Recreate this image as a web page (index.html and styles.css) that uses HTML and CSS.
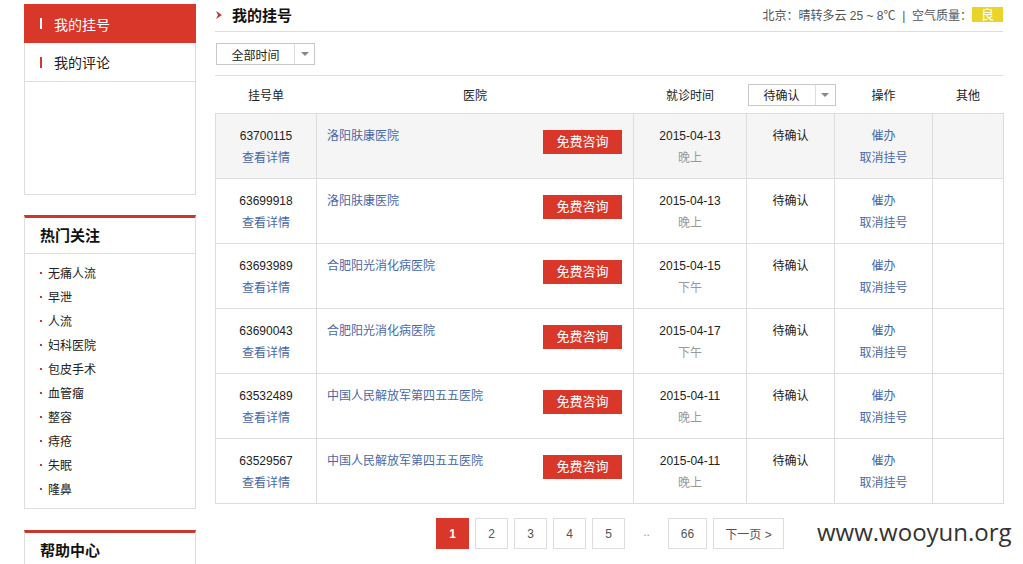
FILE: index.html
```html
<!DOCTYPE html>
<html lang="zh-CN">
<head>
  <meta charset="UTF-8" />
  <title>我的挂号</title>
  <link rel="stylesheet" href="styles.css">
</head>
<body>
  <div class="page">
    <div class="sidebar">
      <div class="side-menu">
        <a class="menu-item active" href="#"><i></i>我的挂号</a>
        <a class="menu-item" href="#"><i></i>我的评论</a>
      </div>

      <div class="side-box">
        <div class="box-title">热门关注</div>
        <ul class="hot-list">
          <li>无痛人流</li>
          <li>早泄</li>
          <li>人流</li>
          <li>妇科医院</li>
          <li>包皮手术</li>
          <li>血管瘤</li>
          <li>整容</li>
          <li>痔疮</li>
          <li>失眠</li>
          <li>隆鼻</li>
        </ul>
      </div>

      <div class="side-box">
        <div class="box-title">帮助中心</div>
      </div>
    </div>

    <div class="main">
      <div class="main-head">
        <h2 class="main-title">
          <svg width="6" height="8" viewBox="0 0 6 8"><polygon points="0,0 6,4 0,8 2,4" fill="#b8392e"/></svg>
          我的挂号
        </h2>
        <div class="weather">北京：晴转多云 25 ~ 8℃ &nbsp;|&nbsp; 空气质量：<span class="aqi">良</span></div>
      </div>

      <div class="filter-bar">
        <div class="select time-select">
          <span class="select-text">全部时间</span>
          <span class="select-arrow"><b></b></span>
        </div>
      </div>

      <table class="reg-table">
        <thead>
          <tr>
            <th class="c-no">挂号单</th>
            <th class="c-hos">医院</th>
            <th class="c-date">就诊时间</th>
            <th class="c-state">
              <div class="select state-select">
                <span class="select-text">待确认</span>
                <span class="select-arrow"><b></b></span>
              </div>
            </th>
            <th class="c-op">操作</th>
            <th class="c-other">其他</th>
          </tr>
        </thead>
        <tbody>
          <tr class="hover">
            <td class="c-no">63700115<br><a href="#">查看详情</a></td>
            <td class="c-hos"><div class="hos"><a href="#">洛阳肤康医院</a><span class="btn-consult">免费咨询</span></div></td>
            <td class="c-date">2015-04-13<br><span class="gray">晚上</span></td>
            <td class="c-state">待确认</td>
            <td class="c-op"><a href="#">催办</a><br><a href="#">取消挂号</a></td>
            <td class="c-other"></td>
          </tr>
          <tr>
            <td class="c-no">63699918<br><a href="#">查看详情</a></td>
            <td class="c-hos"><div class="hos"><a href="#">洛阳肤康医院</a><span class="btn-consult">免费咨询</span></div></td>
            <td class="c-date">2015-04-13<br><span class="gray">晚上</span></td>
            <td class="c-state">待确认</td>
            <td class="c-op"><a href="#">催办</a><br><a href="#">取消挂号</a></td>
            <td class="c-other"></td>
          </tr>
          <tr>
            <td class="c-no">63693989<br><a href="#">查看详情</a></td>
            <td class="c-hos"><div class="hos"><a href="#">合肥阳光消化病医院</a><span class="btn-consult">免费咨询</span></div></td>
            <td class="c-date">2015-04-15<br><span class="gray">下午</span></td>
            <td class="c-state">待确认</td>
            <td class="c-op"><a href="#">催办</a><br><a href="#">取消挂号</a></td>
            <td class="c-other"></td>
          </tr>
          <tr>
            <td class="c-no">63690043<br><a href="#">查看详情</a></td>
            <td class="c-hos"><div class="hos"><a href="#">合肥阳光消化病医院</a><span class="btn-consult">免费咨询</span></div></td>
            <td class="c-date">2015-04-17<br><span class="gray">下午</span></td>
            <td class="c-state">待确认</td>
            <td class="c-op"><a href="#">催办</a><br><a href="#">取消挂号</a></td>
            <td class="c-other"></td>
          </tr>
          <tr>
            <td class="c-no">63532489<br><a href="#">查看详情</a></td>
            <td class="c-hos"><div class="hos"><a href="#">中国人民解放军第四五五医院</a><span class="btn-consult">免费咨询</span></div></td>
            <td class="c-date">2015-04-11<br><span class="gray">晚上</span></td>
            <td class="c-state">待确认</td>
            <td class="c-op"><a href="#">催办</a><br><a href="#">取消挂号</a></td>
            <td class="c-other"></td>
          </tr>
          <tr>
            <td class="c-no">63529567<br><a href="#">查看详情</a></td>
            <td class="c-hos"><div class="hos"><a href="#">中国人民解放军第四五五医院</a><span class="btn-consult">免费咨询</span></div></td>
            <td class="c-date">2015-04-11<br><span class="gray">晚上</span></td>
            <td class="c-state">待确认</td>
            <td class="c-op"><a href="#">催办</a><br><a href="#">取消挂号</a></td>
            <td class="c-other"></td>
          </tr>
        </tbody>
      </table>

      <div class="pager">
        <a class="page-btn current" href="#">1</a>
        <a class="page-btn" href="#">2</a>
        <a class="page-btn" href="#">3</a>
        <a class="page-btn" href="#">4</a>
        <a class="page-btn" href="#">5</a>
        <span class="page-dots">..</span>
        <a class="page-btn wide" href="#">66</a>
        <a class="page-btn next" href="#">下一页 &gt;</a>
      </div>
    </div>
  </div>

  <div class="watermark">www.wooyun.org</div>
</body>
</html>
```

FILE: styles.css
```css
html, body {
  margin: 0;
  padding: 0;
  background: #fff;
  color: #333;
  font-family: "Liberation Sans", "Noto Sans CJK SC", sans-serif;
  font-size: 12px;
}
a { text-decoration: none; color: #4a67a8; }
ul { margin: 0; padding: 0; list-style: none; }

.page {
  display: flex;
  align-items: flex-start;
  padding-left: 24px;
  gap: 19px;
}

/* 1. Sidebar */
.sidebar {
  width: 172px;
  padding-top: 4px;
}
.side-menu {
  height: 190px;
  border: 1px solid #ddd;
  border-top: none;
}
.menu-item {
  display: flex;
  align-items: center;
  height: 38px;
  padding-left: 29px;
  font-size: 14px;
  color: #222;
  border-bottom: 1px solid #ddd;
}
.menu-item i {
  display: block;
  width: 2px;
  height: 11px;
  margin-right: 12px;
  margin-left: -14px;
  background: #d8372a;
}
.menu-item.active {
  background: #d8372a;
  color: #fff;
  margin: 0 -1px;
  padding-left: 30px;
  height: 39px;
  border-bottom: none;
}
.menu-item.active i { background: #fff; }

.side-box {
  margin-top: 20px;
  border: 1px solid #ddd;
  border-top: 3px solid #c8392b;
}
.side-box + .side-box { margin-top: 21px; }
.box-title {
  height: 35px;
  line-height: 35px;
  padding-left: 15px;
  font-size: 15px;
  font-weight: bold;
  color: #111;
  border-bottom: 1px solid #ddd;
}
.hot-list {
  padding: 8px 0 6px 15px;
}
.hot-list li {
  height: 24px;
  line-height: 24px;
  color: #222;
  font-size: 12px;
}
.hot-list li::before {
  content: "";
  display: inline-block;
  width: 2px;
  height: 2px;
  margin: 0 6px 3px 0;
  vertical-align: middle;
  background: #c8392b;
}

/* 2. Main */
.main {
  width: 788px;
}
.main-head {
  display: flex;
  justify-content: space-between;
  align-items: center;
  height: 31px;
  border-bottom: 1px solid #ddd;
}
.main-title {
  margin: 0 0 2px 1px;
  display: flex;
  align-items: center;
  gap: 10px;
  font-size: 15px;
  color: #111;
}
.weather {
  display: flex;
  align-items: center;
  color: #555;
  font-size: 12px;
  margin-bottom: 3px;
}
.aqi {
  display: inline-block;
  width: 31px;
  height: 15px;
  line-height: 15px;
  text-align: center;
  background: #ead42a;
  color: #fff;
  font-size: 13px;
}

.filter-bar {
  padding: 11px 0 10px 1px;
  border-bottom: 1px solid #ddd;
}
.select {
  display: inline-flex;
  height: 20px;
  border: 1px solid #c8c8c8;
  background: #fff;
  font-size: 12px;
  color: #222;
  font-weight: normal;
}
.select-text {
  display: flex;
  align-items: center;
  justify-content: center;
  border-right: 1px solid #ddd;
}
.select-arrow {
  display: flex;
  align-items: center;
  justify-content: center;
  width: 19px;
}
.select-arrow b {
  width: 0;
  height: 0;
  border-left: 4px solid transparent;
  border-right: 4px solid transparent;
  border-top: 4px solid #888;
}
.time-select { width: 97px; }
.time-select .select-text { width: 77px; }
.state-select { width: 86px; margin-left: 1px; }
.state-select .select-text { width: 66px; }

/* 3. Table */
.reg-table {
  width: 788px;
  border-collapse: collapse;
  table-layout: fixed;
}
.reg-table th {
  height: 37px;
  padding: 0;
  font-weight: normal;
  color: #222;
  text-align: center;
}
.reg-table th.c-state { text-align: left; }
.reg-table td {
  padding: 11px 0 9px;
  border: 1px solid #ddd;
  line-height: 22px;
  vertical-align: top;
  text-align: center;
  color: #222;
}
.reg-table tr.hover td { background: #f5f5f5; }
.c-no { width: 101px; }
.c-hos { width: 317px; }
.c-date { width: 113px; }
.c-state { width: 88px; }
.c-op { width: 98px; }
.c-other { width: 71px; }
.reg-table td.c-hos { text-align: left; padding-left: 10px; padding-right: 11px; }
.hos {
  display: flex;
  justify-content: space-between;
  align-items: flex-start;
}
.btn-consult {
  margin-top: 5px;
  width: 79px;
  height: 24px;
  line-height: 24px;
  text-align: center;
  background: #d8372a;
  color: #fff;
  font-size: 13px;
}
.gray { color: #999; }

/* 4. Pager */
.pager {
  display: flex;
  justify-content: center;
  gap: 6px;
  margin-top: 14px;
  padding-left: 2px;
}
.page-btn {
  display: flex;
  align-items: center;
  justify-content: center;
  width: 31px;
  height: 29px;
  border: 1px solid #ddd;
  color: #555;
  font-size: 12px;
}
.page-btn.current {
  background: #d8372a;
  border-color: #d8372a;
  color: #fff;
  font-weight: bold;
}
.page-btn.wide { width: 37px; }
.page-btn.next { width: 69px; }
.page-dots {
  width: 31px;
  line-height: 29px;
  text-align: center;
  color: #999;
}

.watermark {
  position: absolute;
  left: 817px;
  top: 515px;
  font-family: "Open Sans", sans-serif;
  font-size: 24px;
  color: #333;
}
```
